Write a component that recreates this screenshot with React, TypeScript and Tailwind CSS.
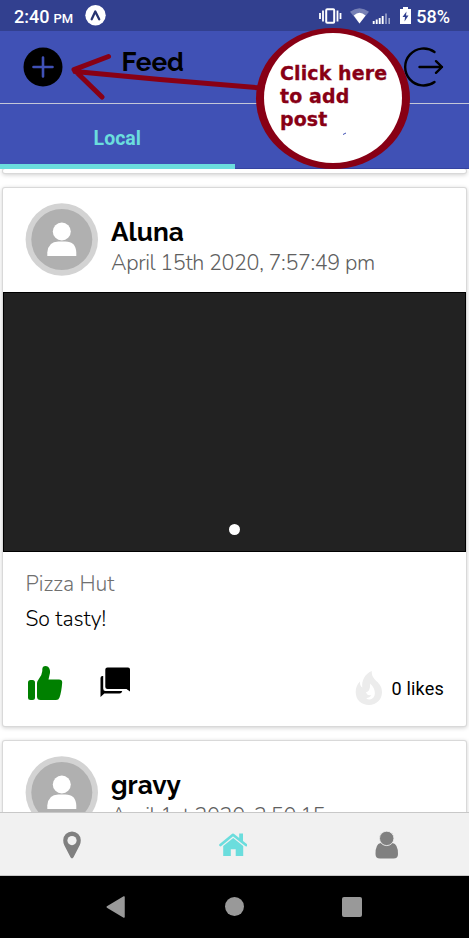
import React from "react";

function StatusBar() {
  return (
    <div className="relative h-[31px] shrink-0 bg-[#32408f] font-['Roboto',sans-serif] text-white">
      <div className="flex h-full items-center justify-between pt-[2px] pr-[19px] pl-[14px]">
        <div className="flex items-center">
          <span className="text-[18px] leading-none font-medium">2:40</span>
          <span className="ml-[4px] pt-[3px] text-[13px] leading-none font-medium">PM</span>
          <svg className="mt-[-2px] ml-[12px]" width="21" height="21" viewBox="0 0 21 21">
            <circle cx="10.5" cy="10.3" r="10.2" fill="#fff" />
            <path d="M6.7 14.2 10.3 6.5 14.2 14.2" fill="none" stroke="#27346f" strokeWidth="2.3" strokeLinecap="round" strokeLinejoin="round" />
          </svg>
        </div>
        <div className="flex items-center">
          <svg className="mt-[-1px]" width="95" height="20" viewBox="318 6 95 20">
            <rect x="326.2" y="9.2" width="8" height="13.6" rx="1" fill="none" stroke="#fff" strokeWidth="2" />
            <path d="M323 10.500v11M337.500 10.500v11M320 13v6M340.500 13v6" stroke="#fff" strokeWidth="1.800" />
            <path d="M350 11.800Q359.500 4.500 369 11.800L359.500 23.500Z" fill="#7680b5" />
            <path d="M353.800 15.600Q359.500 10 365.600 15.600L359.500 23.500Z" fill="#fff" />
            <path d="M373.700 21v3M376.700 19.500v4.500M379.700 18v6M382.700 16v8" stroke="#fff" strokeWidth="1.900" />
            <path d="M386 13.500v10.500M389.200 18v6" stroke="#a3aace" strokeWidth="1.500" />
            <path d="M403 7h5v2h3v15h-11V9h3z" fill="#fff" />
            <path d="M406.500 11.500 402.500 17h2.500l-.5 4.500 4-6h-2.500z" fill="#32408f" />
          </svg>
          <span className="ml-[3px] text-[18px] leading-none font-medium">58%</span>
        </div>
      </div>
    </div>
  );
}

function Header() {
  return (
    <header className="flex h-[73px] shrink-0 items-center border-b border-[#c4c7d8] bg-[#4051b5] pr-[25px] pl-[23px]">
      <svg width="40" height="40" viewBox="0 0 40 40">
        <circle cx="20" cy="20" r="19.500" fill="#000" />
        <path d="M20 10.500v19M10.500 20h19" stroke="#4051b5" strokeWidth="2.600" strokeLinecap="round" />
      </svg>
      <h1 className="mb-[10px] ml-[58.500px] font-['Raleway','Lato',sans-serif] text-[26.200px] leading-none font-bold text-black">Feed</h1>
      <svg className="ml-auto" width="42" height="42" viewBox="402 46.500 42 42">
        <path d="M434.500 52.500A18.500 18.500 0 1 0 434.500 82.500M419.500 67.500H442M436 61.700l6 5.800-6 5.800" fill="none" stroke="#000" strokeWidth="2.400" strokeLinecap="round" strokeLinejoin="round" />
      </svg>
    </header>
  );
}

function Tabs() {
  return (
    <div className="grid h-[65px] shrink-0 grid-cols-2 bg-[#4051b5]">
      <div className="flex items-center justify-center border-b-[5px] border-[#6bdddd] pt-[9px] font-['Roboto',sans-serif] text-[19.500px] leading-none font-bold text-[#6bdddd]">
        Local
      </div>
      <div className="border-b border-[#3543a0]" />
    </div>
  );
}

function Avatar() {
  return (
    <svg className="shrink-0" width="73" height="73" viewBox="0 0 73 73">
      <circle cx="36.800" cy="36.500" r="36.200" fill="#d3d3d3" />
      <circle cx="36.800" cy="36.500" r="30.500" fill="#b0b0b0" />
      <circle cx="36.800" cy="28.500" r="9" fill="#fff" />
      <path d="M22.300 53V49.500Q23.300 38.500 33.300 38.500H40.300Q50.800 38.500 51.300 49.500V53Z" fill="#fff" />
    </svg>
  );
}

function PostHead({ name, date }: { name: string; date: string }) {
  return (
    <div className="flex h-[104px] pt-[15px] pl-[22px]">
      <Avatar />
      <div className="ml-[13px] pt-[14px] whitespace-nowrap">
        <div className="font-['Raleway','Lato',sans-serif] text-[26.200px] leading-[30px] font-bold text-black">{name}</div>
        <div className="mt-[1px] font-['Nunito','Lato',sans-serif] text-[21.500px] leading-[30px] font-light tracking-[-0.370px] text-[#606060]">{date}</div>
      </div>
    </div>
  );
}

const card = "mx-[3px] shrink-0 rounded-[2px] bg-white shadow-[0_0_0_1px_#d9d9d9,0_1px_4px_1px_#d0d0d0]";

function Feed() {
  return (
    <main className="flex h-[643px] shrink-0 flex-col overflow-hidden bg-white">
      <div className={`h-[4px] ${card}`} />
      <article className={`mt-[15px] h-[538px] ${card}`}>
        <PostHead name="Aluna" date="April 15th 2020, 7:57:49 pm" />
        <div className="flex h-[260px] items-end justify-center border border-black bg-[#222222] pb-[16px]">
          <div className="size-[11px] rounded-full bg-white" />
        </div>
        <div className="px-[22px] font-['Nunito','Lato',sans-serif] font-light">
          <p className="pt-[17px] pl-[.5px] text-[21.300px] leading-[30px] text-[#707070]">Pizza Hut</p>
          <p className="mt-[5px] pl-[.5px] text-[21.200px] leading-[30px] text-black">So tasty!</p>
          <div className="mt-[27px] flex h-[44px] items-center">
            <svg width="40" height="40" viewBox="25 663 40 40">
              <rect x="28" y="680" width="7" height="20" rx="2.500" fill="#008000" />
              <path d="M37 683Q37 681 38.500 679.500Q42 675.500 42.300 671V669Q42.500 666 45.500 666C49.500 666 51 671 49.500 675L48.500 679.500H59Q62.300 679.500 62.200 682.500Q61.500 692 59.500 697.500Q58.800 700 56 700H40.500Q37 700 37 696.500Z" fill="#008000" />
            </svg>
            <svg className="mt-[-3px] ml-[33px]" width="34" height="34" viewBox="98 664.500 34 34">
              <path d="M107.500 667H128Q130 667 130 669V691L126.500 688.500H107.500Q105.300 688.500 105.300 686.500V669Q105.300 667 107.500 667Z" fill="#000" />
              <path d="M103.200 675.500H102.500Q100.500 675.500 100.500 677.500V696.500L104.300 693H119.500Q121.500 693 122.300 690.500H105.500Q103.200 690.500 103.200 688Z" fill="#000" />
            </svg>
            <div className="ml-auto flex items-center pt-[9px] font-['Roboto',sans-serif] text-[18px] font-normal tracking-[0.2px] whitespace-nowrap text-black">
              <svg className="mr-[8px]" width="28" height="36" viewBox="355 670 28 36">
                <path d="M371.800 671C364.500 674 361.500 681 362.300 687.500Q359.500 685.500 360 681.500C357 684.500 355.700 688 355.700 692C355.700 700 361.500 705 369 705C376.500 705 382 699.500 382 692C382 681 371 681 371.800 671Z" fill="#ececec" />
                <path d="M370.200 683.500C377 690 376 698.500 370 699.500Q367.500 699.700 366.200 698Q370 698 371.300 695Q367.500 696 365.800 692.500Q370.500 691 370.200 683.500Z" fill="#fff" />
              </svg>
              <span className="pt-[2px]">0 likes</span>
            </div>
          </div>
        </div>
      </article>
      <article className={`mt-[15px] h-[200px] ${card}`}>
        <PostHead name="gravy" date="April 1st 2020, 2:50:15" />
      </article>
    </main>
  );
}

function TabBar() {
  return (
    <nav className="grid h-[64px] shrink-0 grid-cols-3 items-center border-t border-b border-t-[#c8c8c8] border-b-[#c8c8c8] bg-[#f1f1f1]">
      <div className="flex justify-center pr-[13px]">
        <svg width="18" height="28" viewBox="0 0 18 28" className="mt-[1px]">
          <path d="M9 .5A8.800 8.800 0 0 0 .2 9.300Q.2 12 1.300 14.200L7.500 26.300Q9 28.500 10.500 26.300L16.700 14.200Q17.800 12 17.800 9.300A8.800 8.800 0 0 0 9 .5Z" fill="#808080" />
          <circle cx="9" cy="9.600" r="4.600" fill="#f1f1f1" />
        </svg>
      </div>
      <div className="flex justify-center">
        <svg width="28" height="24" viewBox="219 833 28 24" className="mt-[1px] mr-[2px]">
          <path d="M220.500 845 233 834.800 246 845" fill="none" stroke="#6bdddd" strokeWidth="2.700" strokeLinecap="round" strokeLinejoin="round" />
          <path d="M239.200 833.500H243V843L239.200 840Z" fill="#6bdddd" />
          <path d="M223.200 846 233.200 838 243.200 846V856H235.700V849.300H230.800V856H223.200Z" fill="#6bdddd" />
        </svg>
      </div>
      <div className="flex justify-center pr-[7px]">
        <svg width="24" height="28" viewBox="0 0 24 28" className="mt-[1px]">
          <path d="M5.500 12Q.5 13 .5 23Q.5 27.500 5 27.500H18.500Q23 27.500 23 23Q23 13 17.500 12Q12 17 5.500 12Z" fill="#808080" />
          <circle cx="11.700" cy="7.400" r="7.200" fill="#808080" stroke="#f1f1f1" strokeWidth=".8" />
        </svg>
      </div>
    </nav>
  );
}

function SystemBar() {
  return (
    <div className="flex h-[62px] shrink-0 items-center bg-black pb-[1px] pl-[106px]">
      <svg width="19" height="22" viewBox="0 0 19 22">
        <path d="M18 1V21L1.300 11Z" fill="#999" stroke="#999" strokeWidth="1.500" strokeLinejoin="round" />
      </svg>
      <div className="ml-[100px] size-[19px] rounded-full bg-[#999999]" />
      <div className="ml-[98px] size-[20px] rounded-[2px] bg-[#999999]" />
    </div>
  );
}

function Callout() {
  return (
    <div className="pointer-events-none absolute inset-0">
      <svg className="absolute inset-0" width="469" height="938" viewBox="0 0 469 938">
        <path d="M261 88 160 79.500 75 71.500M108.500 56.500 74 69.700 102 97" fill="none" stroke="#880015" strokeWidth="5" strokeLinecap="round" strokeLinejoin="round" />
        <ellipse cx="333" cy="98.500" rx="77" ry="70.500" fill="#880015" />
        <ellipse cx="333" cy="98" rx="69" ry="65" fill="#fff" />
        <path d="M343 134.500 346 133" stroke="#4051b5" strokeWidth="1" />
      </svg>
      <p className="absolute top-[62px] left-[280px] font-['DejaVu_Sans',sans-serif] text-[19px] leading-[23px] font-bold tracking-[0.100px] whitespace-nowrap text-[#880015] [-webkit-text-stroke:0.300px_#880015]">
        Click here
        <br />
        to add
        <br />
        post
      </p>
    </div>
  );
}

export default function App() {
  return (
    <div className="relative flex h-[938px] w-[469px] flex-col overflow-hidden">
      <StatusBar />
      <Header />
      <Tabs />
      <Feed />
      <TabBar />
      <SystemBar />
      <Callout />
    </div>
  );
}
